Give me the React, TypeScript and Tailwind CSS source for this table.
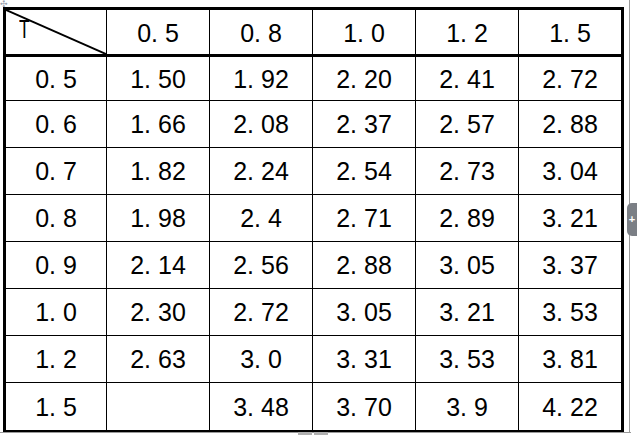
const heads = ["0. 5", "0. 8", "1. 0", "1. 2", "1. 5"];

const rows = [
  { t: "0. 5", v: ["1. 50", "1. 92", "2. 20", "2. 41", "2. 72"] },
  { t: "0. 6", v: ["1. 66", "2. 08", "2. 37", "2. 57", "2. 88"] },
  { t: "0. 7", v: ["1. 82", "2. 24", "2. 54", "2. 73", "3. 04"] },
  { t: "0. 8", v: ["1. 98", "2. 4", "2. 71", "2. 89", "3. 21"] },
  { t: "0. 9", v: ["2. 14", "2. 56", "2. 88", "3. 05", "3. 37"] },
  { t: "1. 0", v: ["2. 30", "2. 72", "3. 05", "3. 21", "3. 53"] },
  { t: "1. 2", v: ["2. 63", "3. 0", "3. 31", "3. 53", "3. 81"] },
  { t: "1. 5", v: ["", "3. 48", "3. 70", "3. 9", "4. 22"] },
];

const cols = "grid grid-cols-[101px_103px_103px_103px_103px_102px] divide-x divide-black";

export default function App() {
  return (
    <div className="relative h-[435px] w-[637px] overflow-hidden bg-white font-['Liberation_Sans',sans-serif] text-[25px] text-black">
      {/* corner marker */}
      <div className="absolute left-0 top-0 text-[9px] leading-none text-gray-400">✣</div>

      <div className="ml-[3px] mt-[7px] w-[621px] border-[3px] border-black">
        {/* header row */}
        <div className={`${cols} h-[47px] border-b-[3px] border-black`}>
          <div className="relative">
            <svg className="absolute inset-0 h-full w-full" viewBox="0 0 101 44" preserveAspectRatio="none">
              <line x1="0" y1="0" x2="101" y2="44" stroke="black" strokeWidth="2" />
            </svg>
            <span className="absolute left-[13px] top-[3px] inline-block origin-left scale-x-[0.7] pt-[4px] leading-none">T</span>
          </div>
          {heads.map((h) => (
            <div key={h} className="flex items-center justify-center pt-[4px]">
              {h}
            </div>
          ))}
        </div>

        {/* body */}
        {rows.map((r, i) => (
          <div
            key={r.t}
            className={`${cols} ${i === 0 ? "h-[44px]" : "h-[47px]"} ${i < rows.length - 1 ? "border-b border-black" : ""}`}
          >
            <div className="flex items-center justify-center pt-[2px]">{r.t}</div>
            {r.v.map((v, j) => (
              <div key={j} className="flex items-center justify-center pt-[2px]">
                {v}
              </div>
            ))}
          </div>
        ))}
      </div>

      {/* editor frame lines */}
      <div className="absolute right-[7px] top-0 h-[433px] w-px bg-[#9a9a9a]" />
      <div className="absolute bottom-[2px] left-0 h-px w-[631px] bg-[#9a9a9a]" />
      <div className="absolute bottom-0 left-[298px] flex gap-[2px]">
        <div className="h-[3px] w-[14px] bg-[#b0b0b0]" />
        <div className="h-[3px] w-[14px] bg-[#b0b0b0]" />
      </div>

      {/* side handle */}
      <div className="absolute right-0 top-[203px] flex h-[33px] w-[10px] items-center justify-center rounded-l-[5px] bg-[#7b7f85] text-[11px] font-bold leading-none text-white">
        +
      </div>
    </div>
  );
}
